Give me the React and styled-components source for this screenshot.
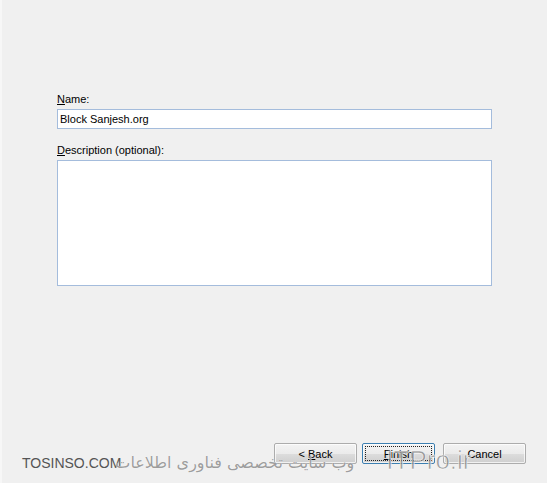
import React from 'react';
import styled, { createGlobalStyle } from 'styled-components';

const GlobalStyle = createGlobalStyle`
  html, body {
    margin: 0;
    padding: 0;
    background: #f0f0f0;
  }
`;

const Page = styled.div`
  position: relative;
  width: 547px;
  height: 483px;
  box-sizing: border-box;
  background: #f0f0f0;
  border-left: 2px solid #f7f7f7;
  font-family: Tahoma, "Liberation Sans", sans-serif;
  font-size: 11px;
  color: #000;
  display: flex;
  flex-direction: column;
  overflow: hidden;
`;

const Form = styled.div`
  padding: 93px 0 0 55px;
  width: 435px;
  display: flex;
  flex-direction: column;
  flex: 1;
`;

const Label = styled.label`
  display: block;
  height: 13px;
  line-height: 13px;
  margin-bottom: 3px;
  u {
    text-decoration: underline;
  }
`;

const TextBox = styled.div`
  box-sizing: border-box;
  height: ${(p) => p.h}px;
  border: 1px solid #a4bcdc;
  background: #fff;
  padding: 2px 2px;
  line-height: 14px;
  margin-bottom: ${(p) => p.mb || 0}px;
`;

const ButtonRow = styled.div`
  display: flex;
  padding: 0 21px 19px 0;
  justify-content: flex-end;
  gap: 5px;
`;

const Button = styled.button`
  box-sizing: border-box;
  width: ${(p) => p.w}px;
  height: 21px;
  padding: 0;
  margin-right: ${(p) => (p.focus ? 3 : 0)}px;
  font: inherit;
  color: #000;
  border-radius: 2px;
  border: 1px solid ${(p) => (p.focus ? '#3c7fb1' : '#acacac')};
  background: linear-gradient(#f3f3f3 0%, #ebebeb 50%, #dddddd 51%, #cfcfcf 100%);
  box-shadow: inset 0 0 0 1px rgba(255, 255, 255, 0.7);
  position: relative;
  outline: none;
  &::after {
    content: '';
    display: ${(p) => (p.focus ? 'block' : 'none')};
    position: absolute;
    inset: 2px;
    border: 1px dotted #222;
  }
  u {
    text-decoration: underline;
  }
`;

const Watermark = styled.div`
  position: absolute;
  left: 20px;
  top: 444px;
  display: flex;
  align-items: baseline;
  pointer-events: none;
  white-space: nowrap;
`;

const Brand = styled.span`
  font-family: "Liberation Sans", sans-serif;
  font-size: 14px;
  color: #555;
`;

const Persian = styled.span`
  font-family: "DejaVu Sans", "Noto Sans", sans-serif;
  font-size: 16px;
  color: rgba(140, 140, 140, 0.85);
  text-shadow: 0 0 1px #fff;
  margin-left: -6px;
  direction: rtl;
`;

const Site = styled.span`
  font-family: "Liberation Sans", sans-serif;
  font-size: 26px;
  color: rgba(130, 130, 130, 0.75);
  -webkit-text-stroke: 0.6px rgba(255, 255, 255, 0.9);
  margin-left: 32px;
  position: relative;
  top: 1px;
`;

export default function App() {
  return (
    <>
      <GlobalStyle />
      <Page>
        <Form>
          <Label>
            <u>N</u>ame:
          </Label>
          <TextBox h={20} mb={15}>
            Block Sanjesh.org
          </TextBox>
          <Label>
            <u>D</u>escription (optional):
          </Label>
          <TextBox h={126} />
        </Form>
        <ButtonRow>
          <Button w={83}>
            &lt; <u>B</u>ack
          </Button>
          <Button w={73} focus>
            <u>F</u>inish
          </Button>
          <Button w={83}>Cancel</Button>
        </ButtonRow>
        <Watermark>
          <Brand>TOSINSO.COM</Brand>
          <Persian>وب سایت تخصصی فناوری اطلاعات</Persian>
          <Site>ITPro.ir</Site>
        </Watermark>
      </Page>
    </>
  );
}
